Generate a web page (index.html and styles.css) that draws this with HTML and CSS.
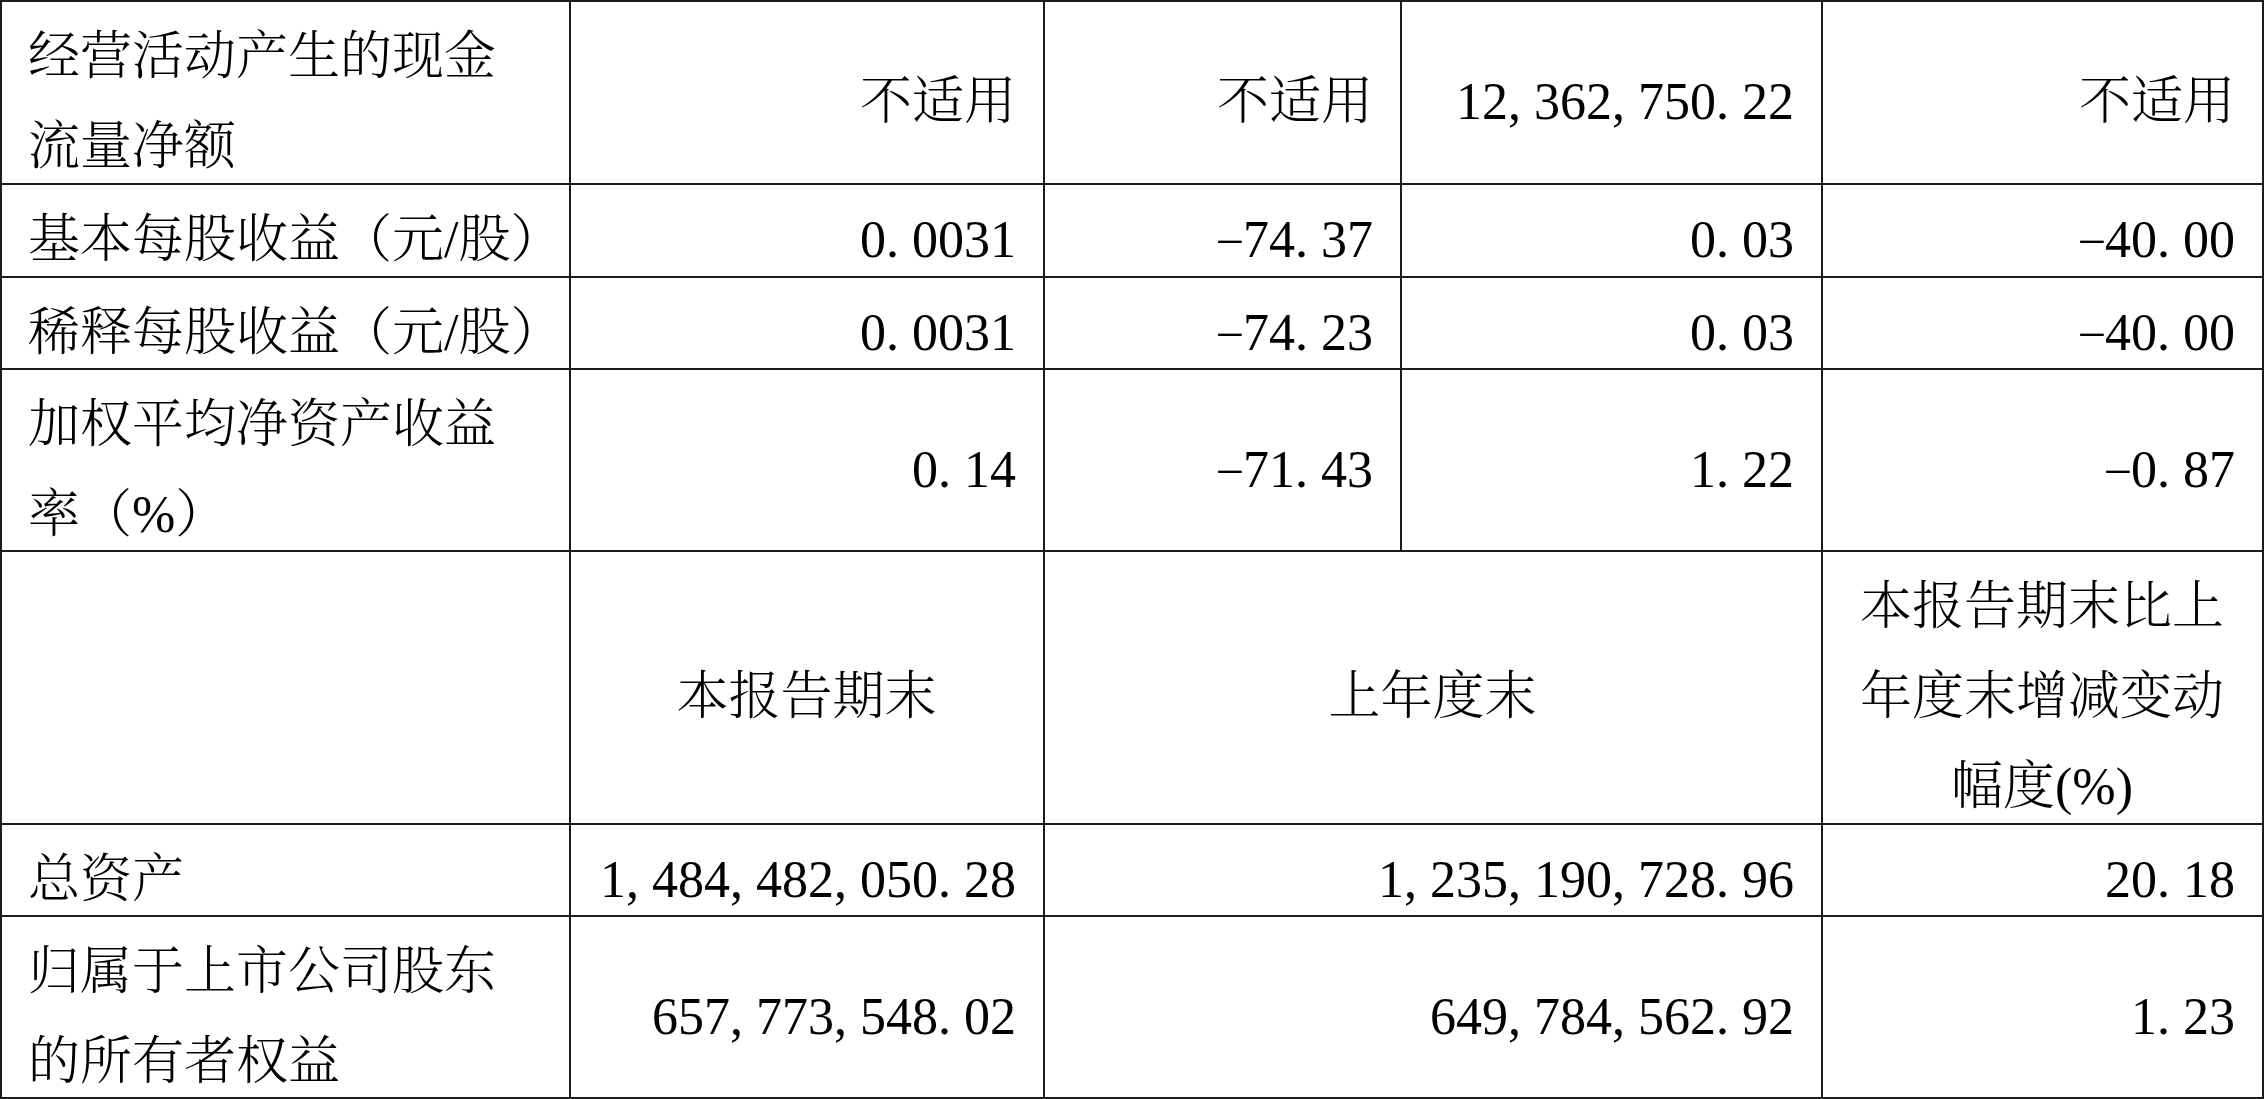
FILE: index.html
```html
<!DOCTYPE html>
<html lang="zh-CN">
<head>
<meta charset="utf-8">
<title>主要会计数据</title>
<link rel="stylesheet" href="styles.css">
</head>
<body>
<div class="sheet">
  <div class="c l">经营活动产生的现金<br>流量净额</div>
  <div class="c">不适用</div>
  <div class="c">不适用</div>
  <div class="c">12<span class="p">,</span>362<span class="p">,</span>750<span class="p">.</span>22</div>
  <div class="c">不适用</div>

  <div class="c l">基本每股收益（元/股）</div>
  <div class="c">0<span class="p">.</span>0031</div>
  <div class="c"><span class="n">-</span>74<span class="p">.</span>37</div>
  <div class="c">0<span class="p">.</span>03</div>
  <div class="c"><span class="n">-</span>40<span class="p">.</span>00</div>

  <div class="c l">稀释每股收益（元/股）</div>
  <div class="c">0<span class="p">.</span>0031</div>
  <div class="c"><span class="n">-</span>74<span class="p">.</span>23</div>
  <div class="c">0<span class="p">.</span>03</div>
  <div class="c"><span class="n">-</span>40<span class="p">.</span>00</div>

  <div class="c l">加权平均净资产收益<br>率（%）</div>
  <div class="c">0<span class="p">.</span>14</div>
  <div class="c"><span class="n">-</span>71<span class="p">.</span>43</div>
  <div class="c">1<span class="p">.</span>22</div>
  <div class="c"><span class="n">-</span>0<span class="p">.</span>87</div>

  <div class="c l"></div>
  <div class="c m">本报告期末</div>
  <div class="c m span2">上年度末</div>
  <div class="c m">本报告期末比上<br>年度末增减变动<br>幅度(%)</div>

  <div class="c l">总资产</div>
  <div class="c">1<span class="p">,</span>484<span class="p">,</span>482<span class="p">,</span>050<span class="p">.</span>28</div>
  <div class="c span2">1<span class="p">,</span>235<span class="p">,</span>190<span class="p">,</span>728<span class="p">.</span>96</div>
  <div class="c">20<span class="p">.</span>18</div>

  <div class="c l">归属于上市公司股东<br>的所有者权益</div>
  <div class="c">657<span class="p">,</span>773<span class="p">,</span>548<span class="p">.</span>02</div>
  <div class="c span2">649<span class="p">,</span>784<span class="p">,</span>562<span class="p">.</span>92</div>
  <div class="c">1<span class="p">.</span>23</div>
</div>
</body>
</html>
```

FILE: styles.css
```css
html, body {
  margin: 0;
  padding: 0;
  background: #ffffff;
}

.sheet {
  display: grid;
  grid-template-columns: 567px 472px 355px 419px 439px;
  grid-template-rows: 181px 91px 90px 180px 271px 90px 180px;
  gap: 2px;
  padding: 2px;
  width: 2264px;
  box-sizing: border-box;
  background: #1c1c1c;
}

.c {
  background: #ffffff;
  display: flex;
  align-items: center;
  justify-content: flex-end;
  min-width: 0;
  min-height: 0;
  padding: 19px 27px 0 26px;
  color: #000000;
  font-family: "Liberation Serif", "Noto Serif CJK SC", "Noto Sans CJK SC", serif;
  font-size: 52px;
  font-weight: 300;
  line-height: 90px;
  white-space: nowrap;
  text-align: right;
}

.l {
  justify-content: flex-start;
  text-align: left;
}

.m {
  justify-content: center;
  text-align: center;
}

.span2 {
  grid-column: span 2;
}

.p {
  letter-spacing: 0.25em;
}

.n {
  display: inline-block;
  width: 26px;
  text-align: center;
  transform-origin: 50% 50%;
  transform: translateY(-1px) scale(1.75, 0.6);
}
```
